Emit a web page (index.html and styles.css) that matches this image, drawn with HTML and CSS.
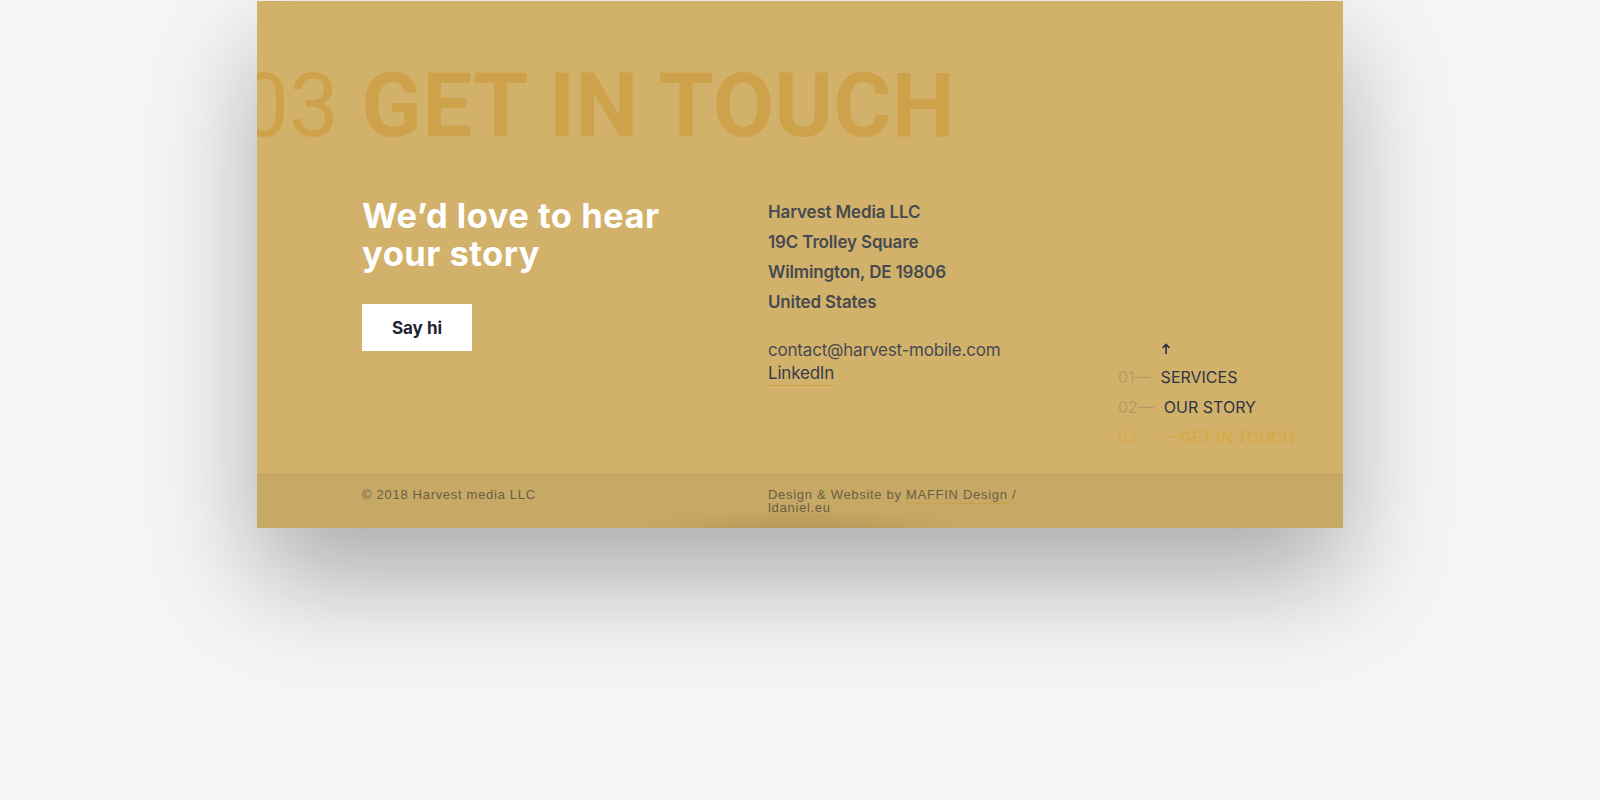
FILE: index.html
```html
<!DOCTYPE html>
<html lang="en">
<head>
<meta charset="utf-8">
<title>Harvest Media — Get in touch</title>
<link rel="stylesheet" href="styles.css">
</head>
<body>
<div class="page">
  <section class="card">
    <div class="card-main">
      <h1 class="hero-title"><span class="hero-num">03</span> <span class="hero-word">GET IN TOUCH</span></h1>
      <div class="contact-row">
        <div class="intro">
          <h2 class="intro-title">We’d love to hear your story</h2>
          <a class="say-hi" href="#">Say hi</a>
        </div>
        <div class="address">
          <div class="addr-lines">
            <div>Harvest Media LLC</div>
            <div>19C Trolley Square</div>
            <div>Wilmington, DE 19806</div>
            <div>United States</div>
          </div>
          <div class="links">
            <div class="email">contact@harvest-mobile.com</div>
            <a class="linkedin" href="#">LinkedIn</a>
          </div>
        </div>
        <nav class="side-nav">
          <div class="nav-up">
            <svg width="10" height="11" viewBox="0 0 10 11"><path d="M5 11V1.5M1.5 5L5 1.5L8.5 5" fill="none" stroke="#2b3040" stroke-width="1.6"/></svg>
          </div>
          <div class="nav-item"><span class="nav-num">01—</span><span class="nav-label">SERVICES</span></div>
          <div class="nav-item"><span class="nav-num">02—</span><span class="nav-label">OUR STORY</span></div>
          <div class="nav-item current"><span class="nav-num">03</span><span class="nav-label">—GET IN TOUCH</span></div>
        </nav>
      </div>
    </div>
    <footer class="footer">
      <div class="copy">© 2018 Harvest media LLC</div>
      <div class="credit">Design &amp; Website by <span class="ul">MAFFIN Design</span> / <span class="ul">ldaniel.eu</span></div>
    </footer>
  </section>
</div>
</body>
</html>
```
FILE: styles.css
```css
html, body {
  margin: 0;
  padding: 0;
}
body {
  background: #f4f5f7;
  font-family: Inter, "Noto Sans", sans-serif;
  width: 1600px;
  height: 800px;
  overflow: hidden;
}
.page {
  display: flex;
  justify-content: center;
  padding-top: 1px;
}
.card {
  position: relative;
  width: 1086px;
  background: #d2b26a;
  box-shadow: 0 50px 100px rgba(0, 0, 0, 0.3);
  overflow: hidden;
}
.card::after {
  content: "";
  position: absolute;
  left: 380px;
  bottom: -18px;
  width: 330px;
  height: 34px;
  background: radial-gradient(ellipse at center, rgba(60, 40, 10, 0.14), rgba(60, 40, 10, 0) 70%);
  filter: blur(4px);
  pointer-events: none;
}
.card-main {
  padding: 60px 0 21px 0;
}
.hero-title {
  margin: 0 0 0 -18px;
  font-family: Roboto, "Liberation Sans", sans-serif;
  font-size: 89px;
  line-height: 90px;
  color: #cea24a;
  white-space: nowrap;
  font-weight: 700;
}
.hero-num {
  font-weight: 400;
}
.hero-word {
  font-weight: 700;
  letter-spacing: 0.3px;
}
.contact-row {
  display: flex;
  margin-top: 46px;
  padding-left: 105px;
}
.intro {
  width: 406px;
  flex: none;
}
.intro-title {
  margin: 0;
  max-width: 330px;
  font-size: 34.5px;
  line-height: 38px;
  font-weight: 700;
  color: #ffffff;
  letter-spacing: 0.5px;
}
.say-hi {
  margin-top: 31px;
  width: 110px;
  height: 47px;
  display: flex;
  align-items: center;
  justify-content: center;
  background: #ffffff;
  color: #1f2533;
  font-weight: 700;
  font-size: 17px;
  text-decoration: none;
}
.address {
  width: 350px;
  flex: none;
}
.addr-lines {
  font-size: 17px;
  line-height: 30px;
  font-weight: 600;
  letter-spacing: -0.15px;
  color: #464a50;
}
.links {
  margin-top: 22px;
  font-size: 17px;
  line-height: 23px;
  letter-spacing: -0.2px;
  color: #464a50;
}
.linkedin {
  display: inline-block;
  color: #353b4a;
  text-decoration: none;
  border-bottom: 1px solid #c99f48;
}
.side-nav {
  padding-top: 146px;
}
.nav-up {
  height: 10px;
  margin: 0 0 9px 43px;
  display: flex;
}
.nav-item {
  display: flex;
  gap: 10px;
  font-size: 16px;
  line-height: 30px;
  color: #2f3544;
}
.nav-num {
  color: rgba(47, 53, 68, 0.2);
}
.nav-item.current .nav-num {
  color: #d6aa52;
  min-width: 36px;
}
.nav-item.current .nav-label {
  color: #d6a94c;
  font-weight: 700;
}
.footer {
  display: flex;
  background: rgba(0, 0, 0, 0.05);
  padding: 15px 0 14px 105px;
  font-family: "Liberation Sans", Arial, sans-serif;
  font-size: 13px;
  line-height: 13px;
  letter-spacing: 0.7px;
  color: #6a5f47;
}
.copy {
  width: 406px;
  flex: none;
}
.credit {
  width: 262px;
}
.ul {
  border-bottom: 1px solid #c99f48;
  padding-bottom: 1px;
}
```
